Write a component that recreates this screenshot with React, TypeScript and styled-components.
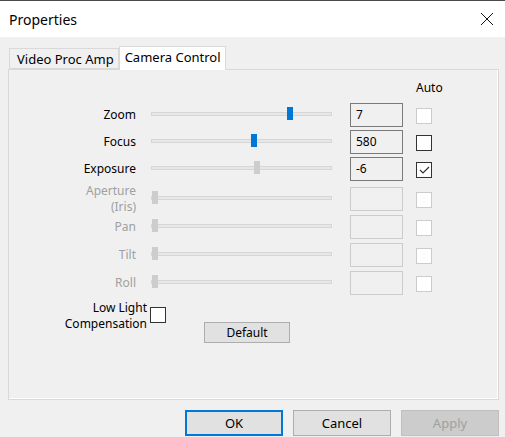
import React from "react";
import styled, {createGlobalStyle} from "styled-components";

const GlobalStyle = createGlobalStyle`
  html, body {
    margin: 0;
    padding: 0;
    background: #f0f0f0;
  }
  body {
    font-family: "Noto Sans", "Liberation Sans", sans-serif;
    font-size: 12px;
    color: #000;
  }
`

type Control = {
    label: string[];
    pos: number;
    value: string;
    enabled: boolean;
    active: boolean;
    auto: "off" | "on" | "disabled";
    mt: number;
};

const controls: Control[] = [
    {label: ["Zoom"], pos: 0.771, value: "7", enabled: true, active: true, auto: "disabled", mt: 0},
    {label: ["Focus"], pos: 0.566, value: "580", enabled: true, active: true, auto: "off", mt: 3},
    {label: ["Exposure"], pos: 0.583, value: "-6", enabled: true, active: false, auto: "on", mt: 3},
    {label: ["Aperture", "(Iris)"], pos: 0, value: "", enabled: false, active: false, auto: "disabled", mt: 6},
    {label: ["Pan"], pos: 0, value: "", enabled: false, active: false, auto: "disabled", mt: 4},
    {label: ["Tilt"], pos: 0, value: "", enabled: false, active: false, auto: "disabled", mt: 4},
    {label: ["Roll"], pos: 0, value: "", enabled: false, active: false, auto: "disabled", mt: 4},
];

export default function App(): JSX.Element {
    return (
        <>
            <GlobalStyle />
            <Window>
                <TitleBar>
                    <Title>Properties</Title>
                    <CloseIcon width="14" height="14" viewBox="0 0 14 14">
                        <path d="M1 1 L13 13 M13 1 L1 13" stroke="#111" strokeWidth="1" fill="none" />
                    </CloseIcon>
                </TitleBar>
                <Body>
                    <Tabs>
                        <Tab>Video Proc Amp</Tab>
                        <Tab $selected>Camera Control</Tab>
                    </Tabs>
                    <Panel>
                        <HeaderRow>
                            <AutoLabel>Auto</AutoLabel>
                        </HeaderRow>
                        {controls.map(c => (
                            <Row key={c.label.join(" ")} $mt={c.mt}>
                                <Label $enabled={c.enabled}>
                                    {c.label.map(l => <div key={l}>{l}</div>)}
                                </Label>
                                <Track>
                                    <Thumb $active={c.active} style={{left: `${c.pos * 175}px`}} />
                                </Track>
                                <ValueBox $enabled={c.enabled}>{c.value}</ValueBox>
                                <CheckBox $enabled={c.auto !== "disabled"}>
                                    {c.auto === "on" && (
                                        <svg width="14" height="14" viewBox="0 0 14 14">
                                            <path d="M3 7 L6 10 L12 4" stroke="#333" strokeWidth="1.2" fill="none" />
                                        </svg>
                                    )}
                                </CheckBox>
                            </Row>
                        ))}
                        <BottomRow>
                            <LowLight>
                                <LowLightLabel>
                                    <div>Low Light</div>
                                    <div>Compensation</div>
                                </LowLightLabel>
                                <LowLightBox $enabled />
                            </LowLight>
                            <DefaultButton>Default</DefaultButton>
                        </BottomRow>
                    </Panel>
                    <Footer>
                        <DialogButton $kind="default">OK</DialogButton>
                        <DialogButton>Cancel</DialogButton>
                        <DialogButton $kind="disabled">Apply</DialogButton>
                    </Footer>
                </Body>
            </Window>
        </>
    )
}

const Window = styled.div`
  width: 505px;
  height: 437px;
  background: #f0f0f0;
  overflow: hidden;
  display: flex;
  flex-direction: column;
`

const TitleBar = styled.div`
  height: 36px;
  background: #fff;
  border-top: 1px solid #4a4a4a;
  display: flex;
  align-items: center;
  justify-content: space-between;
  padding: 0 11px 0 9px;
`

const Title = styled.span`
  font-size: 14px;
  color: #000;
`

const CloseIcon = styled.svg`
  display: block;
`

const Body = styled.div`
  padding: 9px 6px 0 8px;
  display: flex;
  flex-direction: column;
`

const Tabs = styled.div`
  display: flex;
  align-items: flex-end;
  padding-left: 1px;
  height: 23px;
  position: relative;
  z-index: 1;
`

const Tab = styled.div<{ $selected?: boolean }>`
  font-size: 13px;
  line-height: 20px;
  height: ${p => p.$selected ? 24 : 21}px;
  padding: ${p => p.$selected ? "0 4px 0 5px" : "0 4px 0 7px"};
  background: ${p => p.$selected ? "#fff" : "#f0f0f0"};
  border: 1px solid #d9d9d9;
  border-bottom: ${p => p.$selected ? "none" : "1px solid #d9d9d9"};
  margin-bottom: ${p => p.$selected ? -1 : 0}px;
  box-sizing: border-box;
  white-space: nowrap;
`

const Panel = styled.div`
  width: 491px;
  height: 331px;
  box-sizing: border-box;
  border: 1px solid #d9d9d9;
  box-shadow: inset -1px -1px 0 #fff;
  display: flex;
  flex-direction: column;
`

const HeaderRow = styled.div`
  height: 18px;
  margin-top: 8px;
  margin-bottom: 7px;
  padding-left: 407px;
  display: flex;
  align-items: center;
`

const AutoLabel = styled.span`
  font-size: 12px;
`

const Row = styled.div<{ $mt: number }>`
  display: grid;
  grid-template-columns: 142px 199px 66px 16px;
  grid-template-rows: 24px;
  align-items: center;
  height: 24px;
  margin-top: ${p => p.$mt}px;
`

const Label = styled.div<{ $enabled: boolean }>`
  text-align: right;
  padding-right: 15px;
  line-height: 16px;
  color: ${p => p.$enabled ? "#000" : "#a0a0a0"};
`

const Track = styled.div`
  position: relative;
  width: 181px;
  height: 4px;
  box-sizing: border-box;
  background: #e7e7e7;
  border: 1px solid #d6d6d6;
  margin-top: -2px;
`

const Thumb = styled.div<{ $active: boolean }>`
  position: absolute;
  top: -6px;
  width: 6px;
  height: 13px;
  background: ${p => p.$active ? "#0078d7" : "#cdcdcd"};
`

const ValueBox = styled.div<{ $enabled: boolean }>`
  width: 53px;
  height: 24px;
  box-sizing: border-box;
  border: 1px solid ${p => p.$enabled ? "#7a7a7a" : "#cccccc"};
  background: #f0f0f0;
  padding-left: 5px;
  line-height: 22px;
  font-size: 12px;
`

const CheckBox = styled.div<{ $enabled: boolean }>`
  width: 16px;
  height: 16px;
  box-sizing: border-box;
  border: 1px solid ${p => p.$enabled ? "#333" : "#cccccc"};
  background: #fff;
  display: flex;
  align-items: center;
  justify-content: center;
  margin-top: 2px;
`

const LowLightBox = styled(CheckBox)`
  margin-top: -2px;
`

const BottomRow = styled.div`
  display: flex;
  align-items: flex-start;
  margin-top: 5px;
`

const LowLight = styled.div`
  display: flex;
  align-items: center;
  gap: 3px;
`

const LowLightLabel = styled.div`
  width: 138px;
  text-align: right;
  line-height: 16px;
`

const DefaultButton = styled.button`
  margin-left: 38px;
  margin-top: 22px;
  width: 86px;
  height: 21px;
  background: #e1e1e1;
  border: 1px solid #adadad;
  font-family: "Noto Sans", "Liberation Sans", sans-serif;
  font-size: 12px;
  padding: 0;
  line-height: 18px;
`

const Footer = styled.div`
  display: flex;
  justify-content: flex-end;
  gap: 10px;
  margin-top: 10px;
`

const DialogButton = styled.button<{ $kind?: "default" | "disabled" }>`
  width: 98px;
  height: 26px;
  box-sizing: border-box;
  padding: 0;
  font-family: "Noto Sans", "Liberation Sans", sans-serif;
  font-size: 13px;
  color: ${p => p.$kind === "disabled" ? "#a0a0a0" : "#000"};
  background: ${p => p.$kind === "disabled" ? "#cccccc" : "#e1e1e1"};
  border: ${p => p.$kind === "default" ? "2px solid #0078d7" : p.$kind === "disabled" ? "1px solid #bfbfbf" : "1px solid #adadad"};
`
